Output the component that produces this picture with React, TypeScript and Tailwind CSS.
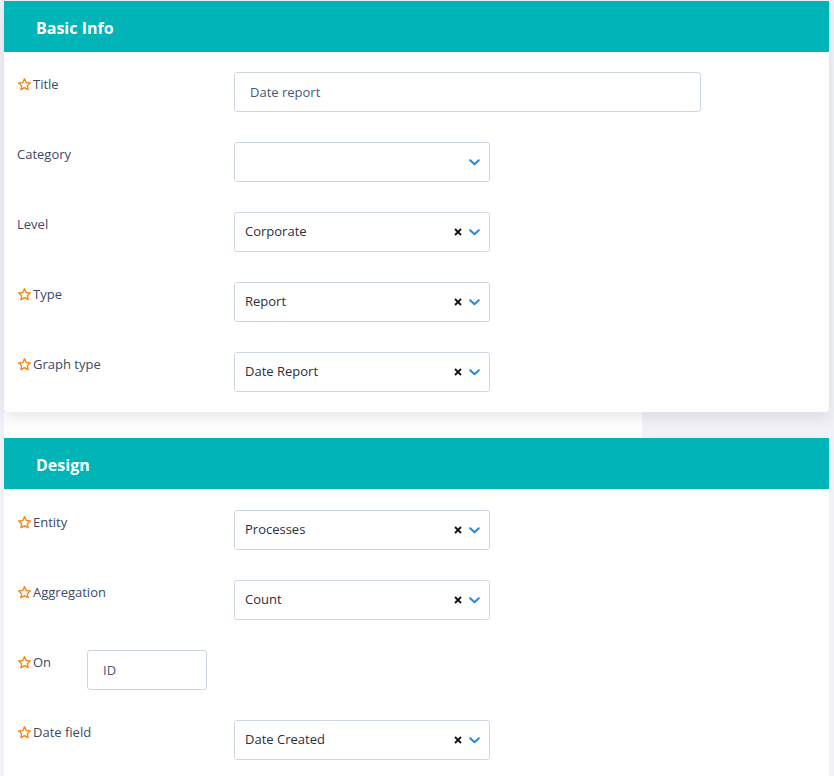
import React from "react";

function Star() {
  return (
    <svg width="15" height="15" viewBox="0 0 24 24" className="mr-[1px] shrink-0">
      <path
        d="M12 2.8l2.8 5.9 6.4.8-4.7 4.4 1.2 6.4L12 17.2l-5.7 3.1 1.2-6.4-4.7-4.4 6.4-.8z"
        fill="none"
        stroke="#f5891f"
        strokeWidth="2.3"
        strokeLinejoin="round"
      />
    </svg>
  );
}

function Chevron() {
  return (
    <svg width="11" height="7" viewBox="0 0 11 7">
      <path d="M1.2 1.3l4.3 4 4.3-4" fill="none" stroke="#1e88e5" strokeWidth="2" strokeLinecap="round" strokeLinejoin="round" />
    </svg>
  );
}

function Cross() {
  return (
    <svg width="8" height="8" viewBox="0 0 8 8">
      <path d="M1 1l6 6M7 1l-6 6" stroke="#111" strokeWidth="1.8" />
    </svg>
  );
}

function Label({ text, required }: { text: string; required?: boolean }) {
  return (
    <div className="flex items-center pt-[3px] text-[13px] leading-[18px] text-[#3c4a66]">
      {required && <Star />}
      <span>{text}</span>
    </div>
  );
}

function Select({ value, clear = true }: { value?: string; clear?: boolean }) {
  return (
    <div className="flex h-[40px] w-[256px] items-center rounded-[3px] border border-[#cdd6e6] bg-white pl-[10px] pr-[9px]">
      <span className="flex-1 text-[13px] text-[#2b2f3a]">{value}</span>
      {clear && value && (
        <span className="mr-[7px] flex items-center">
          <Cross />
        </span>
      )}
      <Chevron />
    </div>
  );
}

function Row({ label, required, children }: { label: string; required?: boolean; children: React.ReactNode }) {
  return (
    <div className="flex h-[40px]">
      <div className="w-[217px] shrink-0">
        <Label text={label} required={required} />
      </div>
      {children}
    </div>
  );
}

function Header({ title }: { title: string }) {
  return (
    <div className="flex h-[51px] items-center bg-[#00b4b7] pl-[32px] pt-[2px] text-[16px] font-bold text-white">
      {title}
    </div>
  );
}

export default function App() {
  return (
    <div
      className="min-h-[776px] bg-[#f1f1f7] pt-[1px] pl-[4px] pr-[5px]"
      style={{ fontFamily: '"Open Sans", "Noto Sans", sans-serif' }}
    >
      <div className="relative z-10 rounded-b-[4px] bg-white shadow-[0_6px_14px_rgba(40,40,90,0.10)]">
        <Header title="Basic Info" />
        <div className="flex flex-col gap-[30px] pl-[13px] pt-[20px] pb-[20px]">
          <Row label="Title" required>
            <div className="flex h-[40px] w-[467px] items-center rounded-[3px] border border-[#cdd6e6] bg-white pl-[15px] pt-[2px] text-[13px] text-[#4a5878]">
              Date report
            </div>
          </Row>
          <Row label="Category">
            <Select clear={false} />
          </Row>
          <Row label="Level">
            <Select value="Corporate" />
          </Row>
          <Row label="Type" required>
            <Select value="Report" />
          </Row>
          <Row label="Graph type" required>
            <Select value="Date Report" />
          </Row>
        </div>
      </div>

      <div className="flex h-[26px]">
        <div className="w-[638px] bg-white" />
        <div className="flex-1" />
      </div>

      <div className="bg-white">
        <Header title="Design" />
        <div className="flex flex-col gap-[30px] pl-[13px] pt-[21px] pb-[20px]">
          <Row label="Entity" required>
            <Select value="Processes" />
          </Row>
          <Row label="Aggregation" required>
            <Select value="Count" />
          </Row>
          <div className="flex h-[40px]">
            <div className="w-[70px] shrink-0">
              <Label text="On" required />
            </div>
            <div className="flex h-[40px] w-[120px] items-center rounded-[3px] border border-[#cdd6e6] bg-white pl-[15px] pt-[2px] text-[13px] text-[#4a5878]">
              ID
            </div>
          </div>
          <Row label="Date field" required>
            <Select value="Date Created" />
          </Row>
        </div>
      </div>
    </div>
  );
}
